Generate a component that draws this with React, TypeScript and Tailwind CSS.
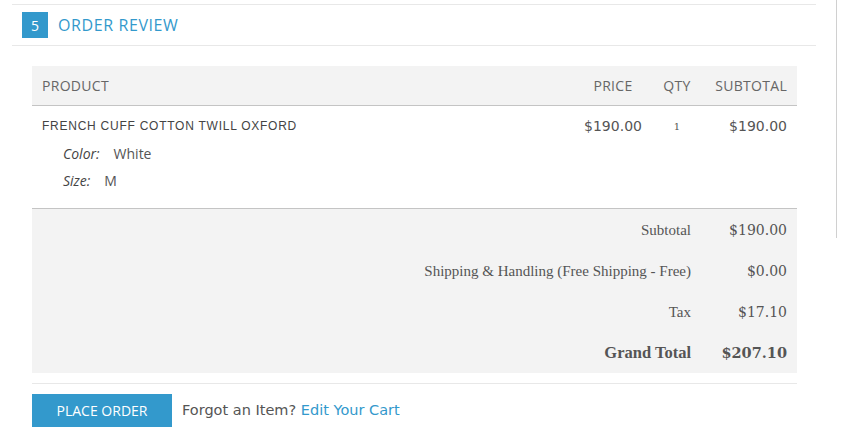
const totals = [
  { label: "Subtotal", value: "$190.00" },
  { label: "Shipping & Handling (Free Shipping - Free)", value: "$0.00" },
  { label: "Tax", value: "$17.10" },
];

export default function App() {
  return (
    <div className="flex h-[439px] w-[843px] overflow-hidden bg-white font-['Open_Sans',sans-serif] text-[#555]">
      <div className="ml-[12px] mt-[4px] w-[804px]">
        {/* Step header */}
        <div className="flex items-center gap-[10px] border-y border-[#e8e8e8] py-[7px] pl-[10px]">
          <span className="flex h-[26px] w-[26px] items-center justify-center bg-[#3399cc] text-[14px] text-white">5</span>
          <h2 className="text-[16px] uppercase tracking-[0.6px] text-[#3399cc]">Order Review</h2>
        </div>

        <div className="ml-[20px] mt-[20px] w-[765px]">
          {/* Table header */}
          <div className="flex h-[40px] items-center border-b border-[#c4c4c4] bg-[#f3f3f3] text-[14px] uppercase tracking-[0.3px] text-[#666]">
            <div className="flex-1 pl-[10px]">Product</div>
            <div className="w-[80px] text-center">Price</div>
            <div className="w-[48px] text-center">Qty</div>
            <div className="w-[96px] pr-[10px] text-right">Subtotal</div>
          </div>

          {/* Item row */}
          <div className="flex h-[102px] pt-[11px]">
            <div className="flex-1 pl-[10px]">
              <p className="font-['Liberation_Sans',sans-serif] text-[12px] uppercase leading-[18px] tracking-[0.75px] text-[#444]">
                French Cuff Cotton Twill Oxford
              </p>
              <dl className="mt-[5px] pl-[21px] text-[14px] leading-[27px]">
                <div className="flex gap-[14px]">
                  <dt className="italic text-[#444]">Color:</dt>
                  <dd>White</dd>
                </div>
                <div className="flex gap-[14px]">
                  <dt className="italic text-[#444]">Size:</dt>
                  <dd>M</dd>
                </div>
              </dl>
            </div>
            <div className="w-[80px] text-center font-['DejaVu_Sans',sans-serif] text-[14px] leading-[18px]">$190.00</div>
            <div className="w-[48px] text-center font-['DejaVu_Serif',serif] text-[10px] leading-[20px]">1</div>
            <div className="w-[96px] pr-[10px] text-right font-['DejaVu_Sans',sans-serif] text-[14px] leading-[18px]">$190.00</div>
          </div>

          {/* Totals */}
          <div className="border-t border-[#c4c4c4] bg-[#f3f3f3] pt-[1px] font-['Liberation_Serif',serif] text-[15px]">
            {totals.map((t) => (
              <div key={t.label} className="flex h-[41px] items-center justify-end">
                <span className="pr-[10px]">{t.label}</span>
                <span className="w-[96px] pr-[10px] text-right font-['DejaVu_Serif',serif] text-[14px]">{t.value}</span>
              </div>
            ))}
            <div className="flex h-[40px] items-center justify-end font-bold">
              <span className="pr-[10px] text-[16.5px]">Grand Total</span>
              <span className="w-[96px] pr-[10px] text-right font-['DejaVu_Serif',serif] text-[14.5px]">$207.10</span>
            </div>
          </div>

          {/* Actions */}
          <div className="mt-[10px] flex items-center gap-[10px] border-t border-[#e8e8e8] pt-[10px]">
            <button className="h-[33px] w-[140px] bg-[#3399cc] text-[14px] uppercase text-white">Place Order</button>
            <p className="font-['DejaVu_Sans',sans-serif] text-[14.5px]">
              Forgot an Item? <a className="text-[#3399cc]">Edit Your Cart</a>
            </p>
          </div>
        </div>
      </div>
      <div className="ml-[20px] h-[238px] border-l border-[#d0d0d0]" />
    </div>
  );
}
